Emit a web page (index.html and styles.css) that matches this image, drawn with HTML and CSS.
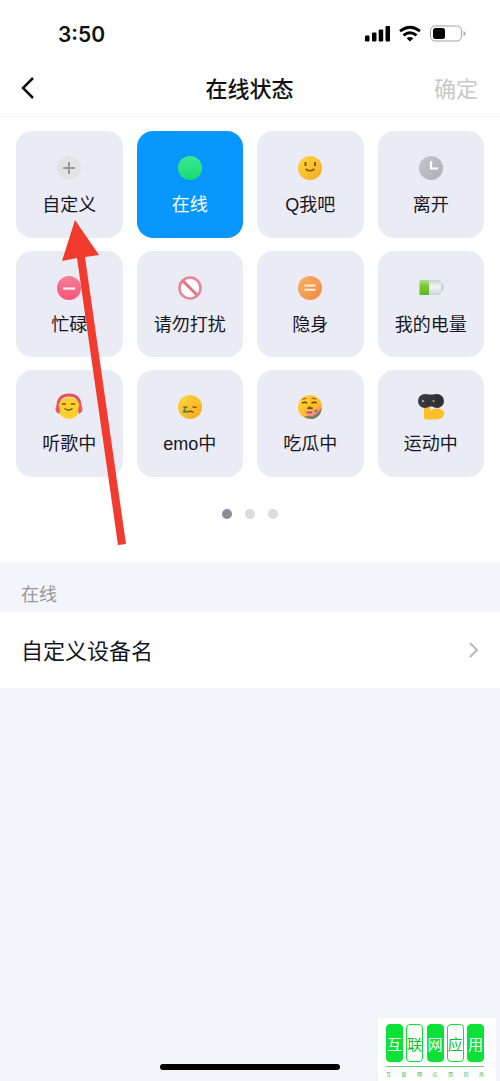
FILE: index.html
```html
<!DOCTYPE html>
<html lang="zh-CN">
<head>
  <meta charset="UTF-8">
  <meta name="viewport" content="width=device-width, initial-scale=1">
  <title>在线状态</title>
  <link rel="stylesheet" href="styles.css">
</head>
<body>
  <!-- shared gradients -->
  <svg class="defs" width="0" height="0" aria-hidden="true">
    <defs>
      <linearGradient id="green" x1="0" y1="0" x2="0" y2="1"><stop offset="0" stop-color="#3de891"/><stop offset="1" stop-color="#16db70"/></linearGradient>
      <linearGradient id="yellow" x1="0" y1="0" x2="1" y2="1"><stop offset="0" stop-color="#ffd83a"/><stop offset="1" stop-color="#f6a821"/></linearGradient>
      <linearGradient id="grey" x1="0" y1="0" x2="1" y2="1"><stop offset="0" stop-color="#c5c6cc"/><stop offset="1" stop-color="#aeb0b6"/></linearGradient>
      <linearGradient id="pink" x1="0" y1="0" x2="0" y2="1"><stop offset="0" stop-color="#f48098"/><stop offset="1" stop-color="#fb5378"/></linearGradient>
      <linearGradient id="orange" x1="0" y1="0" x2="1" y2="1"><stop offset="0" stop-color="#f9b066"/><stop offset="1" stop-color="#ee8b3d"/></linearGradient>
      <linearGradient id="cell" x1="0" y1="0" x2="0" y2="1"><stop offset="0" stop-color="#b0dc94"/><stop offset=".4" stop-color="#78cc32"/><stop offset="1" stop-color="#62b52a"/></linearGradient>
      <linearGradient id="shell" x1="0" y1="0" x2="0" y2="1"><stop offset="0" stop-color="#c9d1d2"/><stop offset=".45" stop-color="#f3f8f8"/><stop offset="1" stop-color="#c8d3d5"/></linearGradient>
    </defs>
  </svg>

  <header class="header">
    <div class="status-bar">
      <span class="time">3:50</span>
      <svg class="status-icons" width="102" height="20" viewBox="0 0 102 20" aria-hidden="true">
        <rect x="1" y="11.500" width="4.500" height="6" rx="1"/>
        <rect x="8" y="8.500" width="4.500" height="9" rx="1"/>
        <rect x="14.700" y="5.500" width="4.500" height="12" rx="1"/>
        <rect x="21.500" y="2" width="4.500" height="15.500" rx="1"/>
        <g fill="none" stroke="#000" stroke-width="2.800">
          <path d="M36 7.200Q46 -.8 56 7.200"/>
          <path d="M39.500 11.300Q46 6.200 52.500 11.300"/>
        </g>
        <path d="M42.600 14.300Q46 11.500 49.400 14.300L46 17.500z"/>
        <rect x="66.500" y="2" width="31" height="15" rx="4.500" fill="none" stroke="#a0a0a0"/>
        <rect x="69" y="4" width="12" height="11" rx="2.500"/>
        <path d="M99.500 7q2 .5 2 2.500t-2 2.500z" fill="#a5a5a5"/>
      </svg>
    </div>
    <nav class="nav">
      <button type="button" class="back" aria-label="返回">
        <svg width="14" height="24" viewBox="0 0 14 24"><path d="M12 2L2 12l10 10" fill="none" stroke="#111" stroke-width="2.500"/></svg>
      </button>
      <h1>在线状态</h1>
      <button type="button" class="confirm" disabled>确定</button>
    </nav>
  </header>

  <main>
    <section class="picker">
      <div class="grid">
        <button type="button" class="tile">
          <svg viewBox="0 0 28 28"><circle cx="14" cy="14" r="12" fill="#e3e3e5"/><path d="M8 14h12M14 8v12" stroke="#99999b" stroke-width="2"/></svg>
          <span>自定义</span>
        </button>
        <button type="button" class="tile active" aria-pressed="true">
          <svg viewBox="0 0 28 28"><circle cx="14" cy="14" r="12" fill="url(#green)"/></svg>
          <span>在线</span>
        </button>
        <button type="button" class="tile">
          <svg viewBox="0 0 28 28"><circle cx="14" cy="14" r="12" fill="url(#yellow)"/><path d="M9.500 8v4M19 8v4" stroke="#8a5a0c" stroke-width="2"/><path d="M9.500 15q4.500 3.500 9 0" fill="none" stroke="#8a5a0c" stroke-width="1.600"/></svg>
          <span>Q我吧</span>
        </button>
        <button type="button" class="tile">
          <svg viewBox="0 0 28 28"><circle cx="14" cy="14" r="12" fill="url(#grey)"/><path d="M14 7v7.500h7" fill="none" stroke="#fff" stroke-width="2.200"/></svg>
          <span>离开</span>
        </button>
        <button type="button" class="tile">
          <svg viewBox="0 0 28 28"><circle cx="14" cy="14" r="12" fill="url(#pink)"/><path d="M8 14.500h12" stroke="#fff0f3" stroke-width="2.200"/></svg>
          <span>忙碌</span>
        </button>
        <button type="button" class="tile">
          <svg viewBox="0 0 28 28"><circle cx="14" cy="14" r="10.500" fill="#fff" stroke="#e88597" stroke-width="2.600"/><path d="M7 7l14 14" stroke="#e27688" stroke-width="3"/></svg>
          <span>请勿打扰</span>
        </button>
        <button type="button" class="tile">
          <svg viewBox="0 0 28 28"><circle cx="14" cy="14" r="12" fill="url(#orange)"/><path d="M8.500 11.500h11M8.500 15.800h11" stroke="#fff1df" stroke-width="2"/></svg>
          <span>隐身</span>
        </button>
        <button type="button" class="tile">
          <svg viewBox="0 0 28 28"><rect x="23" y="9.500" width="3.500" height="8" rx="1.500" fill="#cbd2d3"/><rect x="2.500" y="6" width="21.500" height="15" rx="2" fill="url(#shell)"/><path d="M12 6v15H4q-1.500 0-1.500-1.500v-12Q2.500 6 4 6z" fill="url(#cell)"/></svg>
          <span>我的电量</span>
        </button>
        <button type="button" class="tile">
          <svg viewBox="0 0 28 28"><path d="M3 16Q2 2 14 2t11 14" fill="none" stroke="#e35361" stroke-width="3"/><circle cx="14" cy="15" r="10.800" fill="#ffcf2e"/><path d="M3.500 12Q.5 13 .5 16t3.500 5q2-4-.5-9zM24.500 12q3 1 3 4T24 21q-2-4 .5-9z" fill="#ee5569"/><path d="M7 11.500q2-1.500 4 0M16 11.500q2-1.500 4 0M9.500 15.500q4 3 8 0" fill="none" stroke="#79540f" stroke-width="1.500"/></svg>
          <span>听歌中</span>
        </button>
        <button type="button" class="tile">
          <svg viewBox="0 0 28 28"><circle cx="14" cy="14" r="12" fill="url(#yellow)"/><path d="M7.500 14q2 1 4-.5M16.500 13.500q2 1.500 4 .5M10.500 19.500q3-2.500 7 0" fill="none" stroke="#75510d" stroke-width="1.400"/><path d="M9 14.500q2 4 .5 5.500h-2q-1.500-1.500 1.500-5.500z" fill="#2f9d70"/></svg>
          <span>emo中</span>
        </button>
        <button type="button" class="tile">
          <svg viewBox="0 0 28 28"><circle cx="14" cy="14" r="12" fill="url(#yellow)"/><path d="M25.500 15q0 9-9 11-5 .5-9-3 11 2 18-8z" fill="#777b6c"/><path d="M8 17.500q4 1.500 8 0 4-1 8-3.500-1 6-7 9-6 1.500-9-5.500z" fill="#f4908c"/><path d="M6.500 6.500q2-1.500 4-1M15.500 5.500q3-.5 4.500 1" fill="none" stroke="#9a6512" stroke-width="1.200"/><path d="M6 10q3-1.500 5 0M15.500 10q3-1.500 5 0M11.500 14.500q1.500 2 2.500 0 1 2 2.500 0" fill="none" stroke="#66410c" stroke-width="1.600"/><path d="M11 19.500h5M19 17.500l2 1" stroke="#bc4c43" stroke-width="1.500"/></svg>
          <span>吃瓜中</span>
        </button>
        <button type="button" class="tile">
          <svg viewBox="0 0 28 28"><path d="M7 12h6.500v5.500Q20 14 25 17q3 2 2 5-2 4.500-9 4.500H10q-3 0-3-2.500z" fill="#fbc126"/><path d="M14 18.500q1 2 3 2" fill="none" stroke="#e6aa22" stroke-width=".8"/><circle cx="8" cy="8" r="7" fill="#39393f"/><circle cx="20" cy="8" r="7" fill="#303036"/><path d="M9 1.500h10v12H9z" fill="#34343a"/><circle cx="6" cy="8" r="1" fill="#c5c9e0"/><circle cx="16.500" cy="8" r="1" fill="#dca94a"/></svg>
          <span>运动中</span>
        </button>
      </div>
      <div class="dots">
        <i class="dot current"></i>
        <i class="dot"></i>
        <i class="dot"></i>
      </div>
      <!-- arrow pointing at the first tile -->
      <svg class="arrow" width="66" height="330" viewBox="0 0 66 330" aria-hidden="true">
        <path d="M15 2L39 37l-14 2 41 287-8 1L17 40 2 43z" fill="#f23b2f"/>
      </svg>
    </section>

    <h2 class="group-title">在线</h2>
    <a href="#device" class="row">
      <span>自定义设备名</span>
      <svg width="10" height="16" viewBox="0 0 10 16" aria-hidden="true"><path d="M1 1l7 7-7 7" fill="none" stroke="#b9b9be" stroke-width="2"/></svg>
    </a>
  </main>

  <footer class="footer">
    <div class="home-bar"></div>
    <div class="watermark">
      <div class="mark-name">
        <b>互</b><b>联</b><b>网</b><b>应</b><b>用</b>
      </div>
      <div class="mark-sub">
        <span>互</span><span>联</span><span>网</span><span>应</span><span>用</span><span>指</span><span>南</span>
      </div>
    </div>
  </footer>
</body>
</html>
```
FILE: styles.css
```css
* {
  box-sizing: border-box;
}

body {
  margin: 0;
  min-height: 100vh;
  display: flex;
  flex-direction: column;
  background-color: #f4f5fb;
  color: #16161f;
  font-family: "Liberation Sans", "Noto Sans CJK SC", sans-serif;
}

button {
  border: none;
  padding: 0;
  background: none;
  font-family: inherit;
}

.defs {
  position: absolute;
}

.header {
  background-color: #fff;
  border-bottom: 1px solid #f5f5f5;
}

.status-bar {
  display: flex;
  justify-content: space-between;
  align-items: center;
  height: 60px;
  padding: 8px 34px 0 58px;
}

.time {
  font-family: Inter, sans-serif;
  font-size: 21px;
  font-weight: 600;
  color: #111;
}

.nav {
  display: grid;
  grid-template-columns: 1fr auto 1fr;
  align-items: center;
  height: 56px;
  padding: 0 22px 0 21px;
}

.back {
  justify-self: start;
  height: 24px;
}

.back svg {
  display: block;
}

.nav h1,
.confirm {
  margin: 0;
  padding-top: 4px;
  font-size: 22px;
  font-weight: 500;
  line-height: 32px;
  color: #111;
}

.confirm {
  justify-self: end;
  font-weight: 400;
  color: #c8c8c8;
}

.picker {
  position: relative;
  padding: 14px 16px 44px;
  background-color: #fff;
}

.grid {
  display: grid;
  grid-template-columns: repeat(4, 1fr);
  gap: 13px 14px;
}

.tile {
  display: flex;
  flex-direction: column;
  align-items: center;
  justify-content: center;
  gap: 9px;
  aspect-ratio: 1;
  padding-top: 5px;
  border-radius: 16px;
  background-color: #ebebf5;
  color: #16161f;
  font-size: 18px;
  line-height: 28px;
}

.tile svg {
  width: 28px;
  height: 28px;
}

.tile.active {
  background-color: #0797ff;
  color: #fff;
}

.dots {
  display: flex;
  justify-content: center;
  gap: 13px;
  margin-top: 32px;
}

.dot {
  width: 10px;
  height: 10px;
  border-radius: 50%;
  background-color: #dcdcde;
}

.dot.current {
  background-color: #8a8b9b;
}

.arrow {
  position: absolute;
  left: 60px;
  top: 101px;
}

.group-title {
  margin: 0;
  padding: 18px 21px 3px;
  font-size: 18px;
  font-weight: 400;
  line-height: 28px;
  color: #96979c;
}

.row {
  display: flex;
  justify-content: space-between;
  align-items: center;
  height: 76px;
  padding: 0 21px;
  background-color: #fff;
  color: #16161f;
  font-size: 22px;
  line-height: 32px;
  text-decoration: none;
}

.row span {
  padding-top: 4px;
}

.footer {
  position: relative;
  margin-top: auto;
  padding-bottom: 11px;
}

.home-bar {
  width: 36%;
  height: 6px;
  margin: 0 auto;
  border-radius: 3px;
  background-color: #000;
}

.watermark {
  position: absolute;
  right: 4px;
  bottom: 0;
  width: 118px;
  height: 63px;
  padding: 6px 12px 0 8px;
  background-color: #fff;
}

.mark-name {
  display: flex;
  justify-content: space-between;
  padding-bottom: 4px;
  border-bottom: 1px solid #5fd575;
}

.mark-name b {
  display: flex;
  align-items: center;
  justify-content: center;
  width: 17px;
  height: 38px;
  border: 1px solid #0be137;
  border-radius: 4px;
  background-color: #0be137;
  color: #fff;
  font-size: 15px;
  font-weight: 400;
}

.mark-name b:nth-child(even) {
  background-color: #fff;
  color: #0bc132;
}

.mark-sub {
  display: flex;
  justify-content: space-between;
  padding-top: 4px;
  color: #35bd4f;
  font-size: 5px;
  line-height: 6px;
}
```
